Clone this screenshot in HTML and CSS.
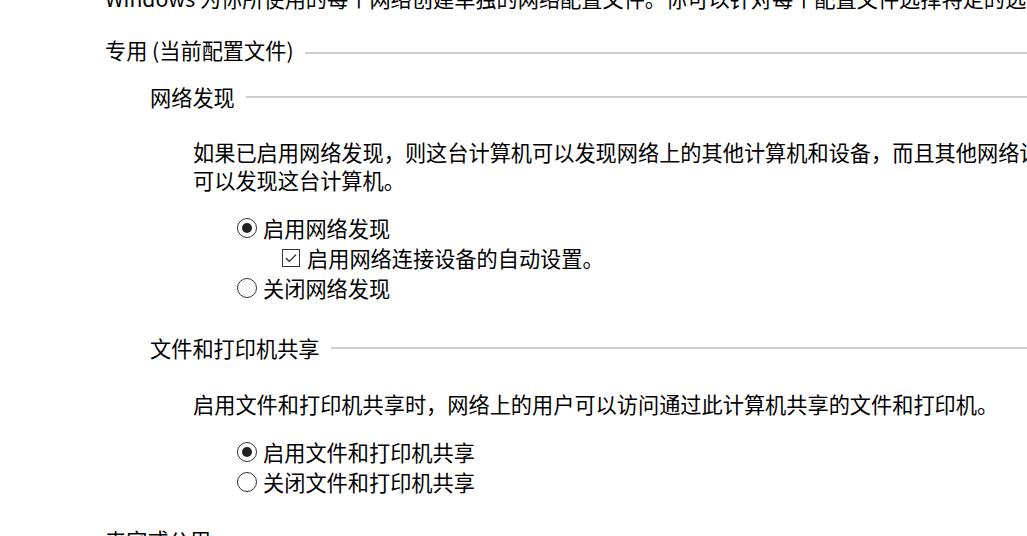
FILE: index.html
```html
<!DOCTYPE html>
<html lang="zh-CN">
<head>
<meta charset="utf-8">
<link rel="stylesheet" href="styles.css">
</head>
<body>
<div class="page">
  <p class="intro">Windows 为你所使用的每个网络创建单独的网络配置文件。你可以针对每个配置文件选择特定的选项。</p>

  <div class="heading h1 first">
    <span class="heading-text">专用 (当前配置文件)</span>
    <span class="rule"></span>
  </div>

  <div class="heading h2 h2-first">
    <span class="heading-text">网络发现</span>
    <span class="rule"></span>
  </div>
  <p class="desc desc-1">如果已启用网络发现，则这台计算机可以发现网络上的其他计算机和设备，而且其他网络计算机也<br>可以发现这台计算机。</p>
  <div class="options">
    <div class="option">
      <span class="radio checked"></span><span>启用网络发现</span>
    </div>
    <div class="option sub">
      <span class="checkbox">
        <svg width="16" height="16" viewBox="0 0 16 16"><path d="M3 8.2 L6.4 11.4 L13 4.6" fill="none" stroke="#222" stroke-width="1.3"/></svg>
      </span><span>启用网络连接设备的自动设置。</span>
    </div>
    <div class="option">
      <span class="radio"></span><span>关闭网络发现</span>
    </div>
  </div>

  <div class="heading h2 h2-second">
    <span class="heading-text">文件和打印机共享</span>
    <span class="rule"></span>
  </div>
  <p class="desc desc-2">启用文件和打印机共享时，网络上的用户可以访问通过此计算机共享的文件和打印机。</p>
  <div class="options options-2">
    <div class="option">
      <span class="radio checked"></span><span>启用文件和打印机共享</span>
    </div>
    <div class="option">
      <span class="radio"></span><span>关闭文件和打印机共享</span>
    </div>
  </div>

  <div class="heading h1 last">
    <span class="heading-text">来宾或公用</span>
    <span class="rule"></span>
  </div>
</div>
</body>
</html>
```

FILE: styles.css
```css
html, body {
  margin: 0;
  padding: 0;
  background: #fff;
  overflow: hidden;
}

body {
  font-family: "Microsoft YaHei", "Noto Sans CJK SC", "Noto Sans", sans-serif;
  font-size: 21.2px;
  line-height: 28px;
  color: #000;
}

.page {
  display: flex;
  flex-direction: column;
  padding-left: 105px;
  width: 1100px;
}

p {
  margin: 0;
}

.intro {
  margin-top: -16px;
  white-space: nowrap;
}

.heading {
  display: flex;
  align-items: center;
  gap: 11px;
  white-space: nowrap;
}

.rule {
  flex: 1;
  height: 2px;
  background: #cfcfcf;
  margin-top: 6px;
}

.h1.first {
  margin-top: 24px;
}

.h2 {
  padding-left: 45px;
}

.h2 .rule {
  margin-top: 0;
}

.h2-first {
  margin-top: 19px;
}

.desc {
  padding-left: 88px;
  white-space: nowrap;
}

.desc-1 {
  margin-top: 27px;
}

.options {
  display: flex;
  flex-direction: column;
  padding-left: 132px;
  margin-top: 19px;
}

.option {
  display: flex;
  align-items: center;
  gap: 6px;
  height: 30px;
  line-height: 30px;
  white-space: nowrap;
}

.option.sub {
  padding-left: 45px;
  gap: 7px;
}

.radio {
  width: 18px;
  height: 18px;
  border: 1px solid #333;
  border-radius: 50%;
  box-sizing: content-box;
  display: flex;
  align-items: center;
  justify-content: center;
  flex-shrink: 0;
}

.radio.checked::after {
  content: "";
  width: 10px;
  height: 10px;
  border-radius: 50%;
  background: #222;
}

.checkbox {
  width: 16px;
  height: 16px;
  border: 1px solid #333;
  display: flex;
  align-items: center;
  justify-content: center;
  flex-shrink: 0;
}

.h2-second {
  margin-top: 31px;
}

.desc-2 {
  margin-top: 28px;
}

.options-2 {
  margin-top: 19px;
}

.h1.last {
  margin-top: 29px;
}
```
